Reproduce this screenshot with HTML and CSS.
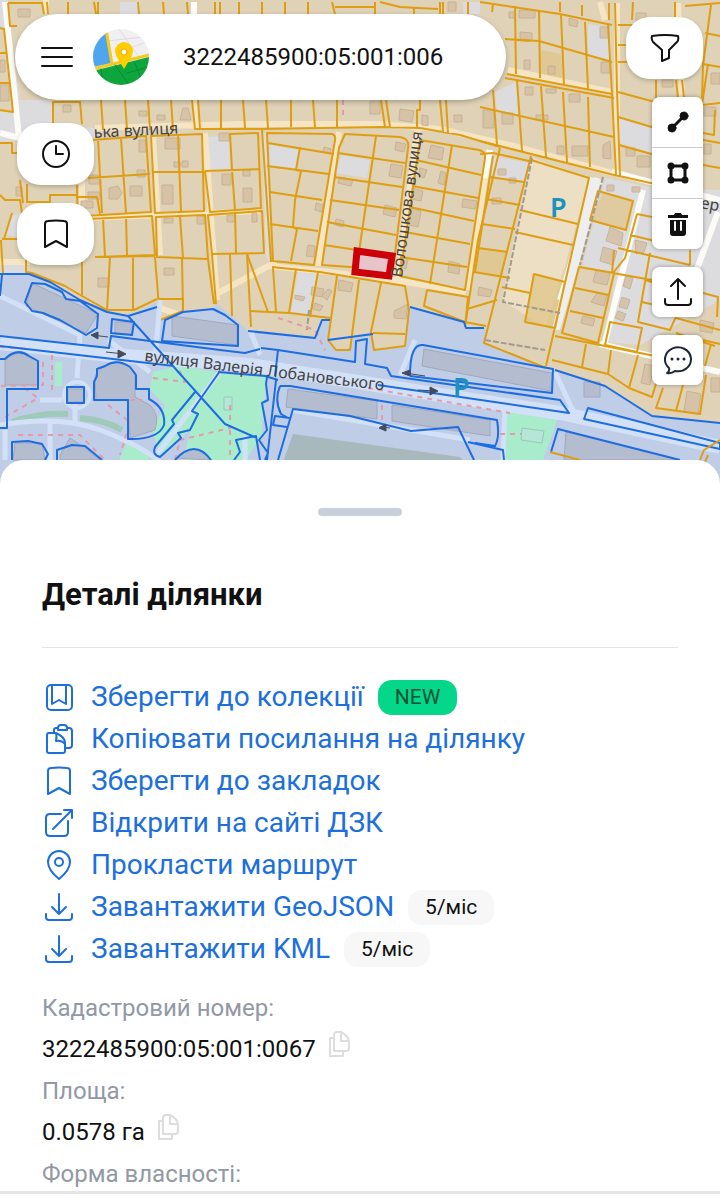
FILE: index.html
```html
<!DOCTYPE html>
<html lang="uk">
<head>
    <meta charset="UTF-8">
    <meta name="viewport" content="width=device-width, initial-scale=1.0">
    <title>Кадастрова карта</title>
    <link rel="stylesheet" href="styles.css">
</head>
<body>
    <main class="map">
        <svg class="map-canvas" viewBox="0 0 720 490" preserveAspectRatio="xMidYMin slice" aria-hidden="true">
            <rect class="land" width="720" height="490"/>

            <!-- gray land without parcels -->
            <path class="gray" d="M0 0H8L14 60 20 100H53V125L95 128V140H20L0 142V112H13L4 29H0ZM203 137L229 136 230 170 206 171ZM270 145L299 150 296 168 269 165ZM341 155L370 160 367 178 336 173ZM298 272L318 274 309 316 291 313ZM495 92L516 82 518 115 497 110ZM588 24L610 28 611 60 588 55ZM493 156L529 163 525 181 490 176ZM620 118L655 128V154L620 143ZM605 178L655 188 720 190V300L640 345 605 342 616 273 582 266ZM5 235L12 215 30 213V238ZM0 262H25V274H0ZM262 133H266L272 262 266 258ZM120 2H140V14H120ZM463 2H480V14H463Z"/>
            <path class="lot" d="M531 157L589 178 566 262 545 328 502 300Z"/>
            <path class="dark-parcel" d="M477 248L507 252 502 277 474 272ZM541 50L561 54 563 85 541 78ZM534 274L565 282 555 328 525 322ZM603 192L633 201 626 230 591 220Z"/>

            <!-- roads -->
            <path class="road cream" d="M95 128L240 124 380 124 440 129 510 145 612 173M46 0L46 14M339 132L318 266M417 130L398 280M489 150L468 290M268 266L330 272 400 281 466 292M153 136L160 255M205 133L217 300M88 218L260 211M82 150L82 210M508 70L612 92M617 3V176M194 100L198 130M0 262L30 262M160 308L180 315M276 262L218 293M600 2L605 20M678 3L682 100"/>
            <path class="road white" d="M5 2L19 138M0 133L20 138M194 2V14M490 150L485 178M612 172L720 200M597 178L560 300M643 190L605 342M718 212L680 315M600 344L720 372"/>
            <path class="wide" d="M590 177L603 180 560 330 552 330Z"/>

            <!-- houses -->
            <path class="house" d="M18 9h12v8H18zM0 60h5v12H0zM0 85h9v16H0zM63 105h8v7h-8zM139 111h8v5h-8zM180 120l3-12h5l3 12zM157 115h8v5h-8zM139 140h7v12h-7zM165 138h15v11h-15zM219 133h10v8h-10zM174 162h6v5h-6zM182 161h6v6h-6zM109 188l9-2 4 7-4 6h-9zM130 186h12v10h-12zM162 185h11v19h-11zM137 170h8v7h-8zM222 174h9v11h-9zM243 188h9v14h-9zM243 170h7v6h-7zM16 187h6v9h-6zM89 175h11v9h-11zM88 192h12v7H88zM81 201h12v7H81zM164 218h9v5h-9zM197 216h7v8h-7zM227 215h8v7h-8zM252 213h5v9h-5zM164 268h10v7h-10zM98 278h11v9H98zM370 101h10v13h-10zM400 109l14 2-2 11-13-2zM422 115l6 1v10l-6-1zM454 115h8v7h-8zM483 110h11v18h-11zM396 142l10 2-2 8-9-2zM431 145l13 3-2 12-14-2zM391 164l12 2-2 12-12-2zM420 168l7 2-3 8-5-2zM441 171l5 2-2 12-6-2zM340 177l13 3-2 6-13-3zM385 205l12 3-2 9-12-3zM412 188l11 3-2 10-10-2zM412 208l9 3-3 16-9-2zM463 199l14 2-2 8-13-2zM324 147l7 2-1 5-7-2zM316 203l7 2-1 7-7-2zM336 219l8 2-1 6-8-2zM308 245l7 1-1 11-8-1zM401 257l7 2-2 10-6-2zM449 261l11 3-1 10-11-2zM509 12h5v6h-5zM519 10h16v8h-16zM520 32l12 1v7l-12-1zM524 60h6v9h-6zM548 66h7v8h-7zM569 18l9 3-1 6-8-2zM600 27h9v11h-9zM601 62h9v11h-9zM525 87h8v8h-8zM546 89h10v4h-10zM569 94h11v8h-11zM502 113h11v11h-11zM536 115h12v5h-12zM557 146h7v8h-7zM572 146h16v10h-16zM603 145l7-4 1 18-8-1zM626 148h9v8h-9zM637 156h13v11h-13zM636 13h10v13h-10zM662 80h11v7h-11zM711 73h9v11h-9zM704 107h12v9h-12zM704 144h7v10h-7zM498 169h8v6h-8zM509 178h7v5h-7zM492 198h9v6h-9zM479 287l13 3-2 7-12-2zM607 185h7v6h-7zM632 187h8v5h-8zM610 227l13 6-2 13-15-5zM603 247l14 4-4 14-13-4zM635 240l12 3-3 9-8 2zM596 270l14 3-3 12-14-3zM597 293l10 2-3 11-13-4zM583 316l12 3-2 7-12-3zM622 297l8 3-3 9-8-2zM618 311l8 3-3 7-8-3zM626 276l7 2-3 11-7-3zM645 364l9 2-4 19-9-2zM687 391l14 3-3 20-14-3zM700 320l14 3-2 10-12-2zM711 378h9v14h-9zM312 287l12 2-2 8-11-2zM322 296l6-7 4 2-5 9zM339 280l14 3-2 9-13-2zM394 311l14-7-2 15-12-1zM295 295l10 2-2 4-8-2zM315 303l8 3-3 5-7-2zM448 2h8v9h-8z"/>

            <!-- highlighted district -->
            <path class="district" d="M0 274H29L50 282 80 300 107 310 128 316 157 302 160 320 183 312 213 309 216 304 232 316 248 331 280 335 315 338 322 320 330 320 328 340 336 350H350L353 338 370 332 374 350 405 346 410 307 464 322 467 328H486L484 343 545 368 605 386 652 416 720 423V490H0Z"/>

            <!-- parcel borders -->
            <g class="parcel">
                <path d="M0 28L4 29 13 112 0 110M0 53H7M0 83H10M8 3L10 26H17M8 3H42L44 14M47 2L48 14M68 2V14M94 2L96 14M98 2V14M138 2L139 14M163 2L164 14M187 2L188 14M215 2V14M220 2V14M239 2V14M262 2V14M285 2V14M308 2V14M332 2L335 14M335 7H375M375 2V14M380 2L400 7 438 9M414 7V14M440 2V14M443 2V14M468 2V14"/>
                <path d="M53 125V102H80L82 124M101 100L103 130M125 100L127 130M148 100L150 130M171 100L173 130M192 100L195 129H262L380 127 420 128 460 135 500 147M198 100L200 129M221 100V129M243 100L245 128M266 100L268 128M291 100V127M313 100L315 127M337 100V127M381 100L385 127M386 100L390 127M420 100V110H417V128M440 100L443 132M446 100L448 134"/>
                <path d="M98 139L102 213M121 138L126 213M92 140L146 136 151 213M151 136L202 134 204 211 155 213ZM178 135L181 212M205 171L210 212 261 208 258 133 230 134 232 170 235 210M88 178L150 174M152 172L203 172M205 171L260 169M85 216L150 212M88 219L152 216 155 255 95 257M103 218L105 256M126 217L127 255M156 217L205 215 208 259 157 257ZM180 216L183 258M208 215L262 211 264 253 212 254ZM235 213L236 253M82 262V295M110 257L107 310M133 257V310M155 257L160 320M182 258L183 311M208 259L214 304M212 254L216 304M230 254L232 316M247 254L251 327M95 257L155 256"/>
                <path d="M0 143H12V153H17M0 195L5 200H20L22 213M20 180L23 203M27 184V203M27 202H50V195H77L78 216M77 185V197H97L100 214M12 213L4 239M1 240L3 274M2 239H20M26 260V272L32 273 65 286 82 296 107 310H134L157 299M158 299H183L183 311 160 320"/>
                <path d="M262 130L271 262M267 133L332 134Q336 135 335 140L314 265 273 261ZM268 143L334 154M267 166L329 174M300 147L296 170 301 171 295 200 293 227 297 229 291 261M270 192L322 200M270 224L318 231"/>
                <path d="M345 134L400 137Q410 139 408 148L393 270 322 265 339 148ZM376 136L359 252M338 153L405 163M334 177L402 187M330 200L399 210M327 222L396 235M324 245L357 250"/>
                <path d="M420 140L479 150Q486 152 485 158L465 290 400 276ZM452 145L430 284M416 160L481 175M412 186L478 198M410 207L474 221M405 232L470 244M400 257L467 267"/>
                <path d="M272 267L320 272 405 286 409 310 405 346 374 350 371 332 381 283M247 254L268 312M273 268L276 312M296 269L289 313M318 272L310 317M337 276L328 340 336 350H350L352 335 359 280M250 311L290 313 330 318M373 333L405 334M427 290L468 297 465 327M427 290L424 306 465 322 486 326M478 240L465 327M467 309L497 300M474 272L510 278M500 148L478 240"/>
                <path d="M480 2L560 14 612 25M493 4L492 12M515 6L516 74M539 10L540 78M561 14L564 85M585 22L588 90M608 24L612 94M505 39L539 41 612 62M507 74L612 94M505 78L614 98M560 2V12M582 5V16M609 3V20M493 90L497 145M517 80L522 151M541 86L546 157M563 92L567 162M588 97L590 167M612 94L616 175M615 3L617 90 620 176M480 107L614 137M480 141L610 174 655 184M505 39L530 41M480 154L493 153 529 161"/>
                <path d="M618 25H640M633 2L632 20M618 45H628M618 62H628M618 92L655 102M618 117L655 128M619 145L655 155M656 80V98M675 2V17M682 80L684 98M676 80L678 98M711 5L703 65 702 98M685 6L720 3M705 33L720 36M703 64L720 67M708 64L702 105 720 103M715 110L714 135 703 133M703 140L720 143M703 165L720 168"/>
                <path d="M531 160L589 178 546 366M531 156L484 343 546 368M493 156L475 272M490 177L524 182M486 199L520 205M482 224L515 229M478 248L508 252M520 210L578 224M515 232L573 245M502 287L530 293M534 274L565 282 555 328 525 322Z"/>
                <path d="M598 191L633 201 626 230 590 220ZM579 267L614 273 598 343 562 333ZM575 288L609 295M570 311L603 318M637 214L652 217M637 214L625 258 613 273 652 280M630 235L655 241M618 248L690 265M614 250L612 273M650 253L638 322 670 330 678 312M645 280L655 283M642 302L655 305M610 322L642 328 637 352 605 345ZM555 336L600 345 655 356M552 360L608 374 629 388 652 397 663 360M586 344L582 367M611 350L608 374M638 355L629 388M663 388L656 408 700 414 706 375M683 385L676 411M690 265V250M703 293L718 297 717 317M676 333L715 346M703 340L720 344M711 344L705 366M676 318L720 330"/>
            </g>

            <path class="hedge" d="M532 158L503 302 560 313M603 177L580 265M485 340L545 350M309 310L307 330"/>

            <path class="green" d="M153 372L178 366 218 372 262 378V434L246 460H184L190 430 160 455 152 430 165 405 150 390ZM55 362H62V386H55ZM119 460L128 440 150 453 148 460ZM507 407L558 418 543 460H505ZM240 377L267 376 261 430 240 430Z"/>
            <path class="bush" d="M12 422Q40 412 68 414M80 418Q105 420 122 430"/>
            <path class="field" d="M293 434L460 457 465 462H283Z"/>

            <path class="street" d="M0 343L110 355 250 365 440 395 560 413 720 447"/>
            <path class="street thin" d="M0 296L80 335 77 378M155 360L160 300M0 425Q60 415 100 430T160 462M50 423V460M75 400V423M40 400H62M220 372L157 454M250 330L260 355M292 410L470 440M400 375L415 340M555 372L575 415M5 430V460M108 340L150 372M505 408L503 460M245 435V462"/>
            <circle class="ring" cx="77" cy="395" r="13"/>

            <path class="block" d="M32 283L98 314 86 333 26 306ZM172 316L237 325V345L172 336ZM115 322H132V334H115ZM5 360Q17 348 31 358L38 361V385H5ZM95 375Q115 350 135 372V397L150 405Q160 415 155 430L130 438 128 400H96ZM68 389H84V402H68ZM424 349L552 373 551 391 422 366ZM288 389L377 401V419L286 407ZM392 405L490 420V436L392 421ZM15 443H42L45 460H13ZM60 455L70 438 85 448 100 460H60ZM175 458Q195 440 210 460ZM566 432L680 460H564ZM584 382H600V397H584Z"/>
            <path class="lawn" d="M224 397H232V410H224ZM522 428L544 431 542 443 521 440Z"/>

            <path class="steps" d="M0 347L30 349M43 362V385L0 386M52 355V392M5 417L38 398 20 385M18 435H80L105 460M100 400H142M108 405L130 422 120 455M153 378L185 382 178 368M175 460L180 440 230 428V405M230 430V460M278 318L315 330 325 350M368 388L510 413M500 434H522M382 405V425M343 100V120"/>
            <g class="border">
                <path d="M0 274H29L50 282 80 300 107 312 128 316 157 307M183 312L213 309 225 315 238 325V346L162 341 165 320 183 312M0 296L2 275M25 302L32 283 45 284 62 292 66 299 80 301 98 314 97 328 86 335 60 320 50 316 43 313 32 311ZM112 319L134 322 132 335 111 333ZM0 336L109 348 111 336 220 350 245 353 260 349M0 346L174 366M128 316L225 424 257 438M0 359H5Q17 347 29 356L38 361V389H7V428H0M67 387H84V403H67ZM94 400V382L97 376V369L105 366Q117 358 130 367L136 375V389H149V399Q166 408 164 425Q158 440 128 439V400ZM220 371L192 411 198 414 190 430 178 433 181 438 160 457Q152 455 155 447L174 424 172 420 195 392M12 460V442L28 441 42 444 48 454 45 460M57 460V450L72 445 85 446 102 460M175 460Q195 438 211 460M234 460L240 452 236 440 256 436 260 460"/>
                <path d="M218 372L265 376 278 380M267 377L266 384 268 400 262 403 267 430 259 440 268 453 265 460M276 380L267 460M278 350L275 376M261 348L278 350 355 362 356 341 367 339 365 364 387 368 391 376 440 383 560 400 569 413 378 385M248 331L315 338 322 320 330 320M328 340L373 334M410 307L464 322 466 328H484M280 386L290 386 497 420Q500 437 495 446L475 443M290 419L281 414Q274 400 280 386M290 418L275 416 273 425 287 427M278 460L293 409 350 416 411 431 458 427 474 460M410 376Q410 343 423 345L553 369 552 393 410 376M555 370L605 386 652 416 720 423M588 408L720 443V449L584 419ZM551 452L558 429 680 460M468 442L503 450 504 460"/>
            </g>
            <path class="parcel" d="M550 452L580 460M700 460L704 450 720 440M705 462L708 455"/>

            <path class="arrow" d="M108 337L92 335M98 332L91 335 98 339ZM106 352L124 354M118 350L126 354 118 358ZM425 376L405 373M410 370L402 373 410 376ZM418 390L435 391M430 387L438 391 430 395ZM390 428L380 427M386 424L379 428 386 431Z"/>

            <path class="selected" d="M357 251L392 256 389 276 355 272Z"/>

            <text class="street-name" transform="translate(94 138) rotate(-3)">ька вулиця</text>
            <text class="street-name" transform="translate(402 278) rotate(-82)">Волошкова вулиця</text>
            <text class="street-name" transform="translate(144 361) rotate(7)">вулиця Валерія Лобановського</text>
            <text class="street-name" transform="translate(700 208) rotate(10)">ер</text>
            <text class="parking" x="550" y="217">P</text>
            <text class="parking" x="453" y="397">P</text>
        </svg>

        <div class="controls">
            <div class="controls-left">
                <form class="search">
                    <button class="plain-btn" type="button" aria-label="Меню">
                        <svg width="32" height="24" viewBox="0 0 32 24"><path d="M1 3H31M1 12H31M1 21H31"/></svg>
                    </button>
                    <svg class="logo" width="56" height="56" viewBox="0 0 56 56" aria-hidden="true">
                        <clipPath id="logo-round"><circle cx="28" cy="28" r="28"/></clipPath>
                        <g clip-path="url(#logo-round)" stroke="none">
                            <path fill="#f0f0f2" d="M0 0H56V56H0Z"/>
                            <path fill="none" stroke="#dcdce2" d="M26 0L46 28M14 12L50 8M34 20L56 12"/>
                            <path fill="#4fa6ee" d="M0 0H14L19 34 0 38Z"/>
                            <path fill="none" stroke="#f5cb19" stroke-width="3" d="M13 0L19 35M0 40L56 26"/>
                            <path fill="#0fa53d" d="M0 42L56 28V56H0Z"/>
                            <path fill="none" stroke="#068d35" d="M10 56L8 40M22 36L36 56M34 44L56 38M42 34L50 56"/>
                            <path fill="#fc0" d="M31 40L25 30Q22 26 22 22A9 9 0 0 1 40 22Q40 26 37 30Z"/>
                            <circle cx="31" cy="23" r="3" fill="#fff" stroke="#eaaa00"/>
                        </g>
                    </svg>
                    <input class="search-input" type="text" aria-label="Кадастровий номер" value="3222485900:05:001:006">
                </form>
                <button class="map-btn" type="button" aria-label="Історія">
                    <svg width="30" height="30" viewBox="0 0 30 30"><circle cx="15" cy="15" r="13"/><path d="M15 7V15H22"/></svg>
                </button>
                <button class="map-btn" type="button" aria-label="Закладки">
                    <svg width="30" height="30" viewBox="0 0 30 30"><path d="M4 28V5Q4 2 7 2Q15 1 23 2Q26 2 26 5V28L15 22Z"/></svg>
                </button>
            </div>
            <div class="controls-right">
                <button class="map-btn" type="button" aria-label="Фільтр">
                    <svg width="30" height="30" viewBox="0 0 30 30"><path d="M2 3Q15 1 28 3Q29 7 27 9L19 17V25L12 28V17L3 9Q1 6 2 3Z"/></svg>
                </button>
                <div class="tools">
                    <button class="tool" type="button" aria-label="Виміряти відстань">
                        <svg class="solid" width="24" height="24" viewBox="0 0 24 24"><path d="M5 19L19 5"/><circle cx="6" cy="18" r="4"/><circle cx="18" cy="6" r="4"/></svg>
                    </button>
                    <button class="tool" type="button" aria-label="Виміряти площу">
                        <svg class="corners" width="24" height="24" viewBox="0 0 24 24"><path d="M5 5H19V19H5Z"/><circle cx="5" cy="5" r="2"/><circle cx="19" cy="5" r="2"/><circle cx="5" cy="19" r="2"/><circle cx="19" cy="19" r="2"/></svg>
                    </button>
                    <button class="tool" type="button" aria-label="Очистити">
                        <svg class="trash" width="24" height="24" viewBox="0 0 24 24"><path d="M2 3H8L9 1H15L16 3H22V6H2ZM4 8H20V21Q20 24 17 24H7Q4 24 4 21Z"/><path class="slots" d="M9 10V18M15 10V18"/></svg>
                    </button>
                </div>
                <div class="tools">
                    <button class="tool" type="button" aria-label="Завантажити файл">
                        <svg width="30" height="30" viewBox="0 0 30 30"><path d="M15 22V2M8 9L15 2 22 9M2 22V25Q2 28 5 28H25Q28 28 28 25V22"/></svg>
                    </button>
                </div>
                <div class="tools">
                    <button class="tool chat" type="button" aria-label="Чат">
                        <svg width="30" height="30" viewBox="0 0 30 30"><path d="M6 23A13 12 0 1 1 12 26Q8 29 4 28Q7 26 6 23Z"/><path class="dots" d="M9 14h0M15 14h0M21 14h0"/></svg>
                    </button>
                </div>
            </div>
        </div>
    </main>

    <section class="sheet">
        <div class="handle"></div>
        <h2>Деталі ділянки</h2>
        <ul class="actions">
            <li>
                <a href="#">
                    <svg width="30" height="30" viewBox="0 0 30 30"><rect x="3" y="3" width="25" height="25" rx="4"/><path d="M8 3V22L15 18 22 22V3"/></svg>
                    Зберегти до колекції
                </a>
                <span class="badge new">NEW</span>
            </li>
            <li>
                <a href="#">
                    <svg width="30" height="30" viewBox="0 0 30 30"><path d="M10 9V6Q10 4 12 4H14M23 4H25Q28 4 28 7V21Q28 24 25 24H21M14 6V4Q14 1 17 1H20Q23 1 23 4V6Z"/><path d="M3 11Q3 9 5 9H12Q21 13 21 19V27Q21 29 19 29H5Q3 29 3 27ZM12 9Q13 12 12 17Q18 16 21 20"/></svg>
                    Копіювати посилання на ділянку
                </a>
            </li>
            <li>
                <a href="#">
                    <svg width="30" height="30" viewBox="0 0 30 30"><path d="M4 28V5Q4 2 7 2Q15 1 23 2Q26 2 26 5V28L15 22Z"/></svg>
                    Зберегти до закладок
                </a>
            </li>
            <li>
                <a href="#">
                    <svg width="30" height="30" viewBox="0 0 30 30"><path d="M17 6H6Q2 6 2 10V24Q2 28 6 28H20Q24 28 24 24V13M9 21L28 2M20 2H28V10"/></svg>
                    Відкрити на сайті ДЗК
                </a>
            </li>
            <li>
                <a href="#">
                    <svg width="30" height="30" viewBox="0 0 30 30"><path d="M15 29Q4 20 4 12A11 11 0 0 1 26 12Q26 20 15 29Z"/><circle cx="15" cy="12" r="4"/></svg>
                    Прокласти маршрут
                </a>
            </li>
            <li>
                <a href="#">
                    <svg width="30" height="30" viewBox="0 0 30 30"><path d="M15 2V22M8 15L15 22 22 15M2 22V25Q2 28 5 28H25Q28 28 28 25V22"/></svg>
                    Завантажити GeoJSON
                </a>
                <span class="badge">5/міс</span>
            </li>
            <li>
                <a href="#">
                    <svg width="30" height="30" viewBox="0 0 30 30"><path d="M15 2V22M8 15L15 22 22 15M2 22V25Q2 28 5 28H25Q28 28 28 25V22"/></svg>
                    Завантажити KML
                </a>
                <span class="badge">5/міс</span>
            </li>
        </ul>
        <dl class="details">
            <dt>Кадастровий номер:</dt>
            <dd>
                3222485900:05:001:0067
                <button class="copy" type="button" aria-label="Копіювати номер">
                    <svg width="22" height="26" viewBox="0 0 22 26"><path d="M6 7H2V25H15V20M6 4Q6 1 9 1H13Q21 5 21 11V17Q21 20 18 20H6ZM13 1V10H21"/></svg>
                </button>
            </dd>
            <dt>Площа:</dt>
            <dd>
                0.0578 га
                <button class="copy" type="button" aria-label="Копіювати площу">
                    <svg width="22" height="26" viewBox="0 0 22 26"><path d="M6 7H2V25H15V20M6 4Q6 1 9 1H13Q21 5 21 11V17Q21 20 18 20H6ZM13 1V10H21"/></svg>
                </button>
            </dd>
            <dt>Форма власності:</dt>
        </dl>
    </section>
    <footer class="bottom-bar"></footer>
</body>
</html>
```

FILE: styles.css
```css
* {
    box-sizing: border-box;
}

body {
    margin: 0;
    height: 100vh;
    display: flex;
    flex-direction: column;
    overflow: hidden;
    background: #fff;
    color: #111;
    font-family: Roboto, "Noto Sans", sans-serif;
}

button {
    border: none;
    padding: 0;
    background: #fff;
    color: #111;
    cursor: pointer;
}

svg {
    display: block;
    flex: none;
    fill: none;
    stroke: currentColor;
    stroke-width: 2;
    stroke-linecap: round;
    stroke-linejoin: round;
}

/* map */
.map {
    position: relative;
    flex: none;
    border-top: 2px solid #111;
}

.map-canvas {
    width: 100%;
    height: auto;
    margin-top: -2px;
    stroke: none;
    stroke-linecap: butt;
}

.land { fill: #dfd2b7; }
.gray { fill: #dcdcde; }
.lot { fill: #ecdfc4; }
.dark-parcel { fill: #dfc384; opacity: 0.7; }
.wide { fill: #eeeeee; }

.road { stroke-width: 6; }
.cream { stroke: #f6e5c3; }
.white { stroke: #fcfbf7; }

.house {
    fill: #d4bfa0;
    stroke: #c4aa8c;
    stroke-width: 1;
    opacity: 0.8;
}

.parcel { stroke: #df9e12; }

.hedge {
    stroke: #a09a8e;
    stroke-dasharray: 6 2;
}

.district { fill: #c0cde6; }
.green { fill: #a8eccb; }
.field { fill: #a8b9bd; }

.bush {
    stroke: #9fc9b8;
    stroke-width: 6;
}

.street {
    stroke: #d3e1f8;
    stroke-width: 14;
}

.thin { stroke-width: 5; }

.ring {
    stroke: #d3e1f8;
    stroke-width: 4;
}

.block {
    fill: #b4bccf;
    stroke: #a2a8bb;
    stroke-width: 1;
}

.lawn {
    fill: #b5e6d8;
    stroke: #93c9b5;
    stroke-width: 1;
}

.steps {
    stroke: #e49aa8;
    stroke-dasharray: 5 5;
}

.border { stroke: #1c6de2; }

.arrow {
    fill: #444b5c;
    stroke: #444b5c;
    stroke-width: 1;
}

.selected {
    fill: #e8c3ca;
    stroke: #cb0009;
    stroke-width: 7;
    stroke-linejoin: miter;
}

.street-name {
    fill: #444;
    font-family: "Noto Sans", sans-serif;
    font-size: 16px;
}

.parking {
    fill: #1c91bd;
    font-family: "Noto Sans", sans-serif;
    font-size: 27px;
    font-weight: 600;
}

.controls {
    position: absolute;
    inset: 0;
    display: flex;
    gap: 120px;
    padding: 12px 17px 0 15px;
}

.controls-left {
    flex: 1;
    min-width: 0;
    display: flex;
    flex-direction: column;
    align-items: flex-start;
    gap: 18px;
}

.controls-right {
    display: flex;
    flex-direction: column;
    align-items: flex-end;
    gap: 18px;
    padding-top: 3px;
}

.search {
    width: 100%;
    height: 86px;
    display: flex;
    align-items: center;
    gap: 20px;
    padding: 0 40px 0 26px;
    margin-bottom: 5px;
    border-radius: 43px;
    background: #fff;
    box-shadow: 0 2px 5px rgba(0, 0, 0, 0.25);
}

.plain-btn {
    background: none;
}

.logo {
    stroke-width: 1;
}

.search-input {
    flex: 1;
    min-width: 0;
    padding: 0 0 0 14px;
    border: none;
    outline: none;
    background: none;
    color: #111;
    font-family: inherit;
    font-size: 24px;
}

.map-btn {
    width: 77px;
    height: 62px;
    flex: none;
    display: grid;
    place-items: center;
    border-radius: 24px;
    box-shadow: 0 2px 4px rgba(0, 0, 0, 0.2);
}

.controls-left .map-btn {
    margin-left: 2px;
}

.tools {
    width: 51px;
    flex: none;
    overflow: hidden;
    border-radius: 8px;
    box-shadow: 0 0 4px rgba(0, 0, 0, 0.35);
}

.tool {
    width: 100%;
    height: 50px;
    display: grid;
    place-items: center;
}

.tool + .tool {
    border-top: 1px solid #ccc;
    height: 51px;
}

.solid {
    fill: currentColor;
    stroke-width: 3;
}

.solid circle {
    stroke-width: 1;
}

.corners {
    stroke-width: 3;
}

.trash {
    fill: currentColor;
    stroke: none;
}

.slots {
    stroke: #fff;
}

.chat {
    color: #1c2836;
}

.dots {
    stroke-width: 3;
}

/* details sheet */
.sheet {
    position: relative;
    flex: 1;
    min-height: 0;
    overflow: hidden;
    margin-top: -30px;
    padding: 48px 42px 0;
    border-radius: 24px 24px 0 0;
    background: #fff;
}

.handle {
    width: 84px;
    height: 8px;
    margin: 0 auto;
    border-radius: 4px;
    background: #c8d1db;
}

h2 {
    margin: 58px 0 28px;
    padding-bottom: 31px;
    border-bottom: 1px solid #e4e4e4;
    color: #111;
    font-size: 31px;
    font-weight: 700;
    line-height: 42px;
}

.actions {
    margin: 0;
    padding: 0;
    list-style: none;
}

.actions li {
    height: 42px;
    display: flex;
    align-items: center;
    gap: 14px;
}

.actions a {
    display: flex;
    align-items: center;
    gap: 17px;
    padding-left: 2px;
    color: #1c6fdc;
    font-size: 28px;
    line-height: 42px;
    text-decoration: none;
}

.badge {
    padding: 0 17px;
    border-radius: 14px;
    background: #f7f7f7;
    color: #111;
    font-size: 21px;
    line-height: 35px;
}

.new {
    background: #04d789;
    color: #0b5238;
}

.details {
    margin: 17px 0 0;
    font-size: 24px;
    line-height: 42px;
}

.details dt {
    color: #9298a5;
}

.details dd {
    margin: 0;
    display: flex;
    gap: 12px;
    line-height: 41px;
}

.copy {
    align-self: flex-start;
    padding-top: 2px;
    color: #ddd;
}

.bottom-bar {
    flex: none;
    height: 9px;
    border-top: 3px solid #e5e5e5;
}
```
